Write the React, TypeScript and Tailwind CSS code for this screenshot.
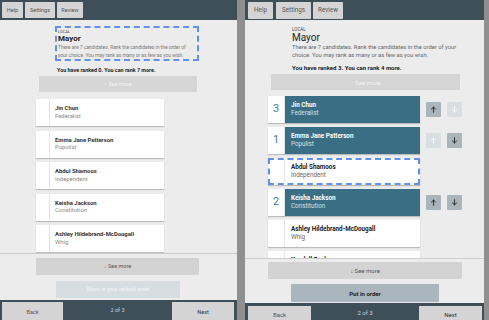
import React from "react";

type Cand = { name: string; party: string; rank?: number; focus?: boolean; up?: boolean; down?: boolean };

const leftCands: Cand[] = [
  { name: "Jin Chun", party: "Federalist" },
  { name: "Emma Jane Patterson", party: "Populist" },
  { name: "Abdul Shamoos", party: "Independent" },
  { name: "Keisha Jackson", party: "Constitution" },
  { name: "Ashley Hildebrand-McDougall", party: "Whig" },
];

const rightCands: Cand[] = [
  { name: "Jin Chun", party: "Federalist", rank: 3, up: true, down: false },
  { name: "Emma Jane Patterson", party: "Populist", rank: 1, up: false, down: true },
  { name: "Abdul Shamoos", party: "Independent", focus: true },
  { name: "Keisha Jackson", party: "Constitution", rank: 2, up: true, down: true },
  { name: "Ashley Hildebrand-McDougall", party: "Whig" },
  { name: "Kendall Beck", party: "Libertarian" },
];

function Arrow({ dir }: { dir: "up" | "down" }) {
  return (
    <svg width="7" height="7" viewBox="0 0 10 10" fill="none" stroke="currentColor" strokeWidth="1.4" strokeLinecap="round" strokeLinejoin="round">
      {dir === "up" ? (
        <>
          <path d="M5 9V1.5" />
          <path d="M2 4.5L5 1.5L8 4.5" />
        </>
      ) : (
        <>
          <path d="M5 1V8.5" />
          <path d="M2 5.5L5 8.5L8 5.5" />
        </>
      )}
    </svg>
  );
}

function MoveBtn({ dir, on }: { dir: "up" | "down"; on?: boolean }) {
  return (
    <div
      className={`w-[15px] h-[15px] rounded-[1px] flex items-center justify-center ${
        on ? "bg-[#a9b4bb] text-[#2b2b2b]" : "bg-[#d9dee1] text-white"
      }`}
    >
      <Arrow dir={dir} />
    </div>
  );
}

function HeaderBtn({ label, w, h, t }: { label: string; w: string; h: string; t: string }) {
  return (
    <div className={`${w} ${h} ${t} bg-[#d4d4d4] rounded-[1px] flex items-center justify-center text-[#555]`}>
      {label}
    </div>
  );
}

function LeftPanel() {
  return (
    <div className="w-[237px] h-full flex flex-col bg-[#ececec] shrink-0">
      <div className="h-[20px] bg-[#3e4f59] flex items-start gap-[2px] pl-[2px] pt-[2px] shrink-0">
        <HeaderBtn label="Help" w="w-[21px]" h="h-[16px]" t="text-[5.5px]" />
        <HeaderBtn label="Settings" w="w-[30px]" h="h-[16px]" t="text-[5.5px]" />
        <HeaderBtn label="Review" w="w-[26px]" h="h-[16px]" t="text-[5.5px]" />
      </div>

      <div className="mt-[6px] ml-[55px] w-[144px] h-[35px] border-2 border-dashed border-[#5e91f2] px-[1px] pt-[1px] text-[#222]">
        <div className="text-[4px] leading-[5px] text-[#444]">LOCAL</div>
        <div className="text-[8px] leading-[9px] font-bold">Mayor</div>
        <div className="text-[5px] leading-[8px] text-[#7a7a7a] tracking-[-0.05px]">
          There are 7 candidates. Rank the candidates in the order of your choice. You may rank as many or as few as you wish.
        </div>
      </div>

      <div className="mt-[6px] ml-[57px] text-[5.4px] leading-[6px] font-bold text-[#222]">
        You have ranked 0. You can rank 7 more.
      </div>

      <div className="mt-[3px] ml-[39px] w-[158px] h-[16px] bg-[#d5d5d5] rounded-[1px] flex items-center justify-center text-[5.5px] text-[#f2f2f2]">
        ↑ See more
      </div>

      <div className="h-[162px] overflow-hidden border-b border-[#cdcdcd] pt-[7px] flex flex-col gap-[4.5px] shrink-0">
        {leftCands.map((c) => (
          <div key={c.name} className="ml-[36px] w-[128px] h-[27px] shrink-0 bg-white flex shadow-[0_1px_1px_rgba(0,0,0,0.2)]">
            <div className="w-[14px] border-r border-[#e4e4e4]" />
            <div className="pl-[5px] flex flex-col justify-center">
              <div className="text-[5.9px] leading-[7.5px] font-bold text-[#333]">{c.name}</div>
              <div className="text-[5.9px] leading-[7.5px] text-[#8a8a8a]">{c.party}</div>
            </div>
          </div>
        ))}
      </div>

      <div className="mt-[4px] ml-[36px] w-[163px] h-[17px] bg-[#d3d3d3] rounded-[1px] flex items-center justify-center text-[5.5px] text-[#555]">
        ↓ See more
      </div>
      <div className="mt-[6px] ml-[56px] w-[124px] h-[17px] bg-[#d7dee2] rounded-[1px] flex items-center justify-center text-[5.5px] text-[#f2f5f7]">
        Show in your ranked order
      </div>

      <div className="mt-auto h-[20px] bg-[#3e4f59] flex items-start pl-[2px] pr-[3px] pt-[2px] shrink-0">
        <div className="w-[61px] h-[20px] bg-[#d4d4d4] flex items-center justify-center text-[5.5px] text-[#555]">Back</div>
        <div className="flex-1 text-center text-[5.5px] leading-[16px] text-[#cfd6da]">2 of 3</div>
        <div className="w-[62px] h-[20px] bg-[#d4d4d4] flex items-center justify-center text-[5.5px] text-[#333]">Next</div>
      </div>
    </div>
  );
}

function RightPanel() {
  return (
    <div className="w-[239px] h-full flex flex-col bg-[#ececec] shrink-0 ml-[8px]">
      <div className="h-[20px] bg-[#3e4f59] flex items-start pl-[3px] pt-[2px] shrink-0">
        <HeaderBtn label="Help" w="w-[25px]" h="h-[17px]" t="text-[6.3px]" />
        <div className="w-[3px]" />
        <HeaderBtn label="Settings" w="w-[35px]" h="h-[17px]" t="text-[6.3px]" />
        <div className="w-[2px]" />
        <HeaderBtn label="Review" w="w-[30px]" h="h-[17px]" t="text-[6.3px]" />
      </div>

      <div className="mt-[7px] ml-[47px] text-[#222]">
        <div className="text-[4.5px] leading-[5px] text-[#444]">LOCAL</div>
        <div className="text-[10px] leading-[11px]">Mayor</div>
        <div className="text-[5.8px] leading-[8px] text-[#666] w-[172px]">
          There are 7 candidates. Rank the candidates in the order of your choice. You may rank as many or as few as you wish.
        </div>
      </div>

      <div className="mt-[5px] ml-[47px] text-[6px] leading-[7px] font-bold text-[#222]">
        You have ranked 3. You can rank 4 more.
      </div>

      <div className="mt-[3px] ml-[26px] w-[189px] h-[16px] bg-[#d5d5d5] rounded-[1px] flex items-center justify-center text-[6px] text-[#f2f2f2]">
        ↑ See more
      </div>

      <div className="h-[169px] overflow-hidden border-b border-[#cdcdcd] pt-[6px] flex flex-col gap-[4px] shrink-0">
        {rightCands.map((c) => {
          const ranked = c.rank !== undefined;
          return (
            <div key={c.name} className="flex items-center shrink-0">
              <div
                className={`ml-[23px] w-[152px] h-[27px] flex bg-white shadow-[0_1px_1px_rgba(0,0,0,0.2)] ${
                  c.focus ? "border-2 border-dashed border-[#5e91f2]" : ""
                }`}
              >
                <div className={`${c.focus ? "w-[15px]" : "w-[17px]"} flex items-center justify-center text-[11px] text-[#3f7d96] border-r border-[#e4e4e4]`}>
                  {c.rank ?? ""}
                </div>
                <div className={`flex-1 pl-[6px] flex flex-col justify-center ${ranked ? "bg-[#396e84]" : ""}`}>
                  <div className={`text-[6.3px] leading-[7.5px] font-bold ${ranked ? "text-white" : "text-[#222]"}`}>{c.name}</div>
                  <div className={`text-[6.3px] leading-[7.5px] ${ranked ? "text-[#d3e3ea]" : "text-[#666]"}`}>{c.party}</div>
                </div>
              </div>
              {ranked && (
                <div className="flex gap-[6px] ml-[6px]">
                  <MoveBtn dir="up" on={c.up} />
                  <MoveBtn dir="down" on={c.down} />
                </div>
              )}
            </div>
          );
        })}
      </div>

      <div className="mt-[3px] ml-[23px] w-[194px] h-[17px] bg-[#d3d3d3] rounded-[1px] flex items-center justify-center text-[6px] text-[#555]">
        ↓ See more
      </div>
      <div className="mt-[5px] ml-[46px] w-[148px] h-[18px] bg-[#a9b6bd] rounded-[1px] flex items-center justify-center text-[6px] font-bold text-[#222]">
        Put in order
      </div>

      <div className="mt-auto h-[17px] bg-[#3e4f59] flex items-start pl-[3px] pr-[2px] pt-[3px] shrink-0">
        <div className="w-[63px] h-[16px] bg-[#d4d4d4] flex items-center justify-center text-[6px] text-[#555]">Back</div>
        <div className="flex-1 text-center text-[6px] leading-[14px] text-[#cfd6da]">2 of 3</div>
        <div className="w-[63px] h-[16px] bg-[#d4d4d4] flex items-center justify-center text-[6px] text-[#333]">Next</div>
      </div>
    </div>
  );
}

export default function App() {
  return (
    <div className="w-[489px] h-[320px] flex bg-[#8f8f8f] overflow-hidden font-['Roboto',sans-serif]">
      <LeftPanel />
      <RightPanel />
    </div>
  );
}
